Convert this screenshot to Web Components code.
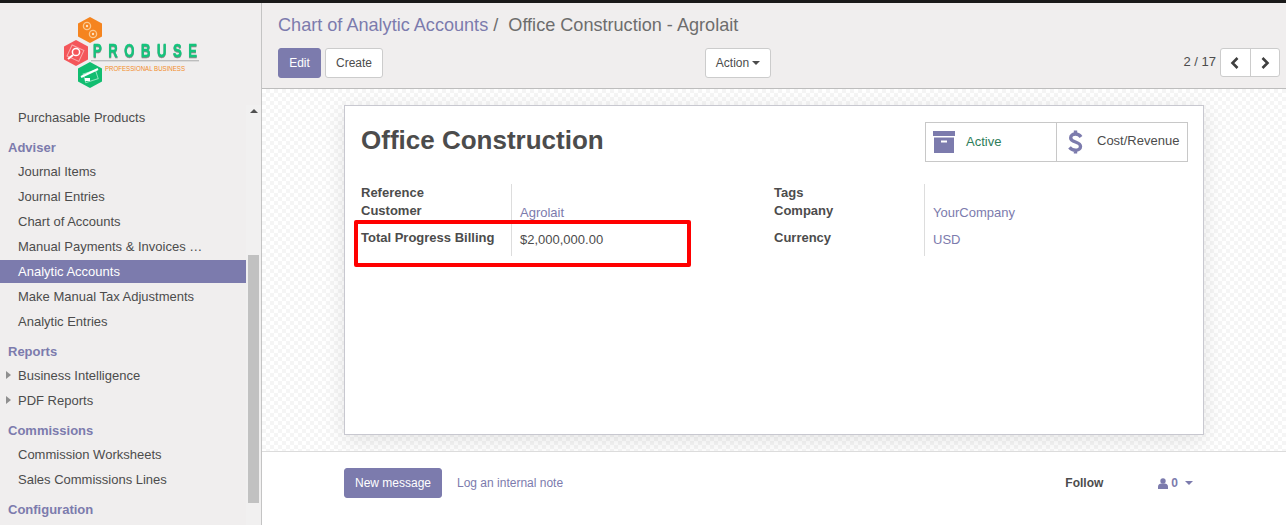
<!DOCTYPE html>
<html><head><meta charset="utf-8"><title>Office Construction</title>
<style>
html,body{margin:0;height:525px;overflow:hidden;font-family:"Liberation Sans",Arial,sans-serif;font-size:13px;color:#4c4c4c;background:#fff}
</style></head><body>
<app-shell>
  <side-nav slot="side">
    <nav-item>Purchasable Products</nav-item>
    <nav-header>Adviser</nav-header>
    <nav-item>Journal Items</nav-item>
    <nav-item>Journal Entries</nav-item>
    <nav-item>Chart of Accounts</nav-item>
    <nav-item>Manual Payments &amp; Invoices …</nav-item>
    <nav-item active>Analytic Accounts</nav-item>
    <nav-item>Make Manual Tax Adjustments</nav-item>
    <nav-item>Analytic Entries</nav-item>
    <nav-header>Reports</nav-header>
    <nav-item caret>Business Intelligence</nav-item>
    <nav-item caret>PDF Reports</nav-item>
    <nav-header>Commissions</nav-header>
    <nav-item>Commission Worksheets</nav-item>
    <nav-item>Sales Commissions Lines</nav-item>
    <nav-header>Configuration</nav-header>
  </side-nav>
  <control-panel slot="main"></control-panel>
  <form-view slot="main"></form-view>
  <chatter-bar slot="main"></chatter-bar>
</app-shell>
<script>
const def=(name,html,init)=>customElements.define(name,class extends HTMLElement{
  constructor(){super();this.attachShadow({mode:'open'}).innerHTML=html;}
  connectedCallback(){if(init)init(this);}
});
def('app-shell',`<style>
:host{display:block;height:525px;box-sizing:border-box;border-top:3px solid #1a1a1a;overflow:hidden}
.w{display:flex;height:522px}
.s{flex:0 0 261px;width:261px;border-right:1px solid #c4c4c4;background:#f0eeee}
.m{flex:1;min-width:0;display:flex;flex-direction:column}
</style><div class="w"><div class="s"><slot name="side"></slot></div><div class="m"><slot name="main"></slot></div></div>`);

def('side-nav',`<style>
:host{display:flex;flex-direction:column;height:522px;overflow:hidden}
.logo{flex:0 0 102px;height:102px}
svg{display:block}
.body{flex:1;display:flex;min-height:0}
.list{flex:0 0 246px;width:246px;overflow:hidden}
.track{flex:1;display:flex;flex-direction:column;align-items:center;background:#f1f0f0}
.up{margin-top:4px;width:0;height:0;border:4px solid transparent;border-top:0;border-bottom:4px solid #505050}
.thumb{margin-top:142px;width:11px;height:248px;background:#c1c1c1;flex:none}
</style>
<div class="logo"><svg width="261" height="102" viewBox="0 0 261 102" role="img" aria-label="Probuse logo">
<polygon points="90,14 102,20.500 102,33.500 90,40 78,33.500 78,20.500" fill="#f5841f"/>
<g fill="none" stroke="#fbc98f" stroke-width="1.300"><circle cx="87" cy="23" r="3.600"/><circle cx="93" cy="31" r="3.600"/></g>
<g fill="#fde3c4"><circle cx="87" cy="23" r="1.200"/><circle cx="93" cy="31" r="1.200"/></g>
<polygon points="76,37 88,43.500 88,56.500 76,63 64,56.500 64,43.500" fill="#f4565a"/>
<rect x="69" y="44" width="13" height="12" fill="none" stroke="#f9a9ab" stroke-width="1" transform="rotate(25 75 50)"/>
<circle cx="76" cy="49" r="3.600" fill="#f4565a" stroke="#fff" stroke-width="1.500"/>
<line x1="73" y1="52" x2="68" y2="56" stroke="#fff" stroke-width="2"/>
<polygon points="90,59 102,65.500 102,78.500 90,85 78,78.500 78,65.500" fill="#11bd70"/>
<rect x="84" y="69" width="13" height="9" fill="none" stroke="#8fe3bd" stroke-width="1" transform="rotate(-18 90 73)"/>
<line x1="81" y1="74" x2="98" y2="66" stroke="#fff" stroke-width="2"/>
<rect x="85" y="75" width="5" height="3" fill="#fff"/>
<text transform="translate(93 53.500) scale(.75 1)" font-family="Liberation Sans" font-weight="700" font-size="17.500" letter-spacing="8.700" fill="#14c47c" stroke="#14c47c" stroke-width=".4" style="filter:drop-shadow(0 1px 0 #8a8a8a)">PROBUSE</text>
<rect x="91" y="57" width="108" height="1.400" fill="#bdbdbd"/>
<text x="105" y="67.500" font-family="Liberation Sans" font-size="7.200" fill="#f28c28" textLength="80" lengthAdjust="spacingAndGlyphs">PROFESSIONAL BUSINESS</text>
</svg></div>
<div class="body"><div class="list"><slot></slot></div><div class="track"><div class="up"></div><div class="thumb"></div></div></div>`);

def('nav-item',`<style>
:host{display:block;height:25px;line-height:25px;box-sizing:border-box;padding-left:18px;white-space:nowrap;position:relative;color:#4c4c4c;font-size:13px}
:host([active]){background:linear-gradient(transparent 0 1px,#7c7bad 1px 24px,transparent 24px);color:#fff}
:host([caret]) .c{position:absolute;left:6px;top:8px;width:0;height:0;border:4px solid transparent;border-left:5px solid #8f8f8f;border-right:0}
</style><span class="c"></span><slot></slot>`);

def('nav-header',`<style>
:host{display:block;height:29px;box-sizing:border-box;padding:9px 0 0 8px;line-height:17px;font-weight:700;color:#7c7bad;font-size:13px}
</style><slot></slot>`);

const btnCss=`.btn{box-sizing:border-box;height:30px;display:inline-flex;align-items:center;justify-content:center;border-radius:3px;font:12px "Liberation Sans",Arial,sans-serif;border:1px solid #ccc;background:#fff;color:#4c4c4c}
.pri{background:#7c7bad;border-color:#7c7bad;color:#fff}`;

def('control-panel',`<style>
:host{display:block;height:86px;box-sizing:border-box;background:#f0eeee;border-bottom:1px solid #bdbdbd;padding:12px 6px 0 16px}
${btnCss}
.bc{font-size:18.100px;line-height:20px;height:33px;white-space:pre;color:#6d6d6d}
.bc a{color:#7c7bad}
.row{display:grid;grid-template-columns:427px auto 1fr;align-items:start}
.l{display:flex;gap:4px}
.r{display:flex;justify-content:flex-end;align-items:flex-start;gap:4px}
.pg{font-size:13px;line-height:28px}
.pgr{display:flex;height:29px;border:1px solid #ccc;border-radius:3px;background:#fff;box-sizing:border-box;width:60px}
.pgr span{flex:1;display:flex;align-items:center;justify-content:center}
.pgr span+span{border-left:1px solid #ccc}
.car{display:inline-block;margin-left:3px;border:4px solid transparent;border-top:4px solid #4c4c4c;border-bottom:0;vertical-align:middle}
.act{width:66px}
</style>
<div class="bc"><a>Chart of Analytic Accounts</a> /  Office Construction - Agrolait</div>
<div class="row"><div class="l"><span class="btn pri" style="width:43px">Edit</span><span class="btn" style="width:58px">Create</span></div>
<div><span class="btn act">Action<i class="car"></i></span></div>
<div class="r"><span class="pg">2 / 17</span><div class="pgr"><span><svg width="12" height="14" viewBox="0 0 12 14"><path d="M8.500 2 3.500 7l5 5" fill="none" stroke="#3f3f3f" stroke-width="2.600"/></svg></span><span><svg width="12" height="14" viewBox="0 0 12 14"><path d="M3.500 2l5 5-5 5" fill="none" stroke="#3f3f3f" stroke-width="2.600"/></svg></span></div></div></div>`);

def('form-view',`<style>
:host{display:block;height:363px;flex:none;box-sizing:border-box;padding:16px 82px 0 82px;position:relative;overflow:hidden;
background-color:#fff;background-image:conic-gradient(#f5f5f5 25%,#fff 0 50%,#f5f5f5 0 75%,#fff 0);background-size:8px 8px;border-bottom:1px solid #dcdcdc}
.sheet{box-sizing:border-box;width:860px;height:330px;background:#fff;border:1px solid #c8c8d0;box-shadow:0 5px 20px rgba(0,0,0,.1);padding:16px;position:relative}
.top{display:flex;justify-content:space-between;align-items:flex-start;height:62px}
h1{margin:0;font-size:26px;line-height:36px;font-weight:700;color:#4c4c4c}
.stats{display:flex;border:1px solid #c8c8c8;height:40px;box-sizing:border-box;margin-right:-1px}
.st{display:flex;align-items:center;box-sizing:border-box;height:38px}
.st+.st{border-left:1px solid #c8c8c8}
.groups{display:grid;grid-template-columns:413px 1fr;}
.g{display:grid;grid-template-columns:150px 1fr;grid-template-rows:18px 27px 27px}
.k{font-weight:700;line-height:17px}
.v{border-left:1px solid #ddd;padding:2px 0 0 8px;line-height:18px}
a{color:#7c7bad}
.mark{position:absolute;left:9px;top:114px;width:337px;height:47px;box-sizing:border-box;border:4px solid #f00;border-radius:2px}
</style>
<div class="sheet">
 <div class="top"><h1>Office Construction</h1>
  <div class="stats">
   <div class="st" style="width:130px;padding-left:7px"><svg width="22" height="22" viewBox="0 0 22 22"><path d="M0 0h22v5H0zM1 6.500h20V22H1z" fill="#7c7bad"/><rect x="8" y="9.500" width="6" height="2" fill="#fff"/></svg><span style="margin-left:11px;color:#2e7d5b;position:relative;top:-1px">Active</span></div>
   <div class="st" style="width:131px;padding-left:11px"><svg width="15" height="26" viewBox="0 0 15 26"><path d="M13 8C11.500 5.800 9.500 5 7.500 5 4.700 5 2.700 6.500 2.700 8.900c0 5.100 9.800 3.100 9.800 8.500 0 2.400-2.200 3.800-5 3.800-2.200 0-4.400-.9-6-2.800M7.500 1.500V6M7.500 20V24.500" fill="none" stroke="#7c7bad" stroke-width="3.400"/></svg><span style="margin-left:14px;position:relative;top:-2px">Cost/Revenue</span></div>
  </div></div>
 <div class="groups">
  <div class="g"><div class="k">Reference</div><div class="v"></div><div class="k">Customer</div><div class="v"><a>Agrolait</a></div><div class="k" style="line-height:18px">Total Progress Billing</div><div class="v">$2,000,000.00</div></div>
  <div class="g"><div class="k">Tags</div><div class="v"></div><div class="k">Company</div><div class="v"><a>YourCompany</a></div><div class="k" style="line-height:18px">Currency</div><div class="v"><a>USD</a></div></div>
 </div>
 <div class="mark"></div>
</div>`);

def('chatter-bar',`<style>
:host{display:block;flex:1;box-sizing:border-box;padding:16px 0 0 82px;background:#fff}
${btnCss}
.r{display:flex;align-items:center;height:30px;font-size:12px}
.lg{margin-left:15px;color:#7c7bad}
.fl{margin-left:auto;font-weight:700;font-size:12px}
.fo{margin-left:55px;display:flex;align-items:center;color:#7c7bad;margin-right:93px;font-weight:700}
.c{margin-left:7px;border:4px solid transparent;border-top:4px solid #7c7bad;border-bottom:0}
svg{display:block;margin-right:3px}
</style><div class="r"><span class="btn pri" style="width:98px">New message</span><span class="lg">Log an internal note</span><span class="fl">Follow</span><span class="fo"><svg width="10" height="11" viewBox="0 0 10 11"><circle cx="5" cy="3" r="2.700" fill="#7c7bad"/><path d="M0 11V8.500C0 6.500 2 5.500 3 5.500h4C8 5.500 10 6.500 10 8.500V11z" fill="#7c7bad"/></svg>0<i class="c"></i></span></div>`);
</script>
</body></html>
